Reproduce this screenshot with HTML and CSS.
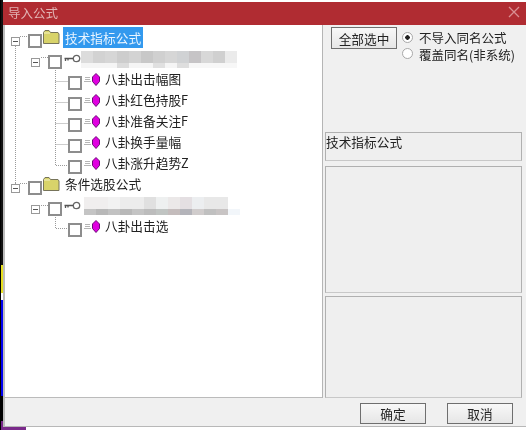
FILE: index.html
```html
<!DOCTYPE html>
<html lang="zh">
<head>
<meta charset="utf-8">
<title>导入公式</title>
<link rel="stylesheet" href="styles.css">
</head>
<body>
<div class="screen">
  <div class="edge"></div>
  <div class="window">
    <header class="titlebar">
      <span class="title">导入公式</span>
      <svg class="close" width="12" height="12" viewBox="0 0 12 12"><path d="M1 1L11 11M11 1L1 11" stroke="#d98f92" stroke-width="1.3" fill="none"/></svg>
    </header>
    <div class="main">
      <div class="tree">
        <svg class="links" width="317" height="373" viewBox="0 0 317 373">
          <g stroke="#9a9a9a" stroke-width="1" stroke-dasharray="1 1" fill="none">
            <path d="M10.5 19V158M15 11.5H23"/>
            <path d="M10.5 165V158M15 158.5H23"/>
            <path d="M30.5 41V36M36 32.5H43"/>
            <path d="M30.5 186V180M36 180.5H43"/>
            <path d="M50.5 43V140.5H63M50.5 56.500H63M50.5 77.500H63M50.500 98.500H63M50.500 119.500H63"/>
            <path d="M50.5 190V203.500H63"/>
          </g>
        </svg>
        <div class="row lv0 r1">
          <span class="exp"></span><span class="check"></span>
          <svg class="folder" width="17" height="15" viewBox="0 0 17 15"><path d="M.5 13.500V2.500L2 .5H6L7.500 2.500H15L16 4V13.500Z" fill="#d8d36a" stroke="#77745a"/><path d="M1 3H7" stroke="#f4f2c4"/></svg>
          <span class="name selected">技术指标公式</span>
        </div>
        <div class="row lv1">
          <span class="exp"></span><span class="check"></span>
          <svg class="key" width="17" height="9" viewBox="0 0 17 9"><circle cx="12.500" cy="4.500" r="3.200" fill="#fff" stroke="#666" stroke-width="1.300"/><path d="M.5 4.500H9M1.500 4.500V7M4 4.500V6.500" stroke="#555" stroke-width="1.300" fill="none"/></svg>
          <span class="mosaic mosaic-a"></span>
        </div>
        <div class="row lv2"><span class="check"></span><svg class="gem" width="18" height="13" viewBox="0 0 18 13"><path d="M1 4.500H6M1 6.500H6M0 8.500H7" stroke="#b5b5b5"/><path d="M12 .5L15.500 4V8.500L12 12.500L8.500 8.500V4Z" fill="#e000e0" stroke="#6e0a78"/></svg><span class="name">八卦出击幅图</span></div>
        <div class="row lv2"><span class="check"></span><svg class="gem" width="18" height="13" viewBox="0 0 18 13"><path d="M1 4.500H6M1 6.500H6M0 8.500H7" stroke="#b5b5b5"/><path d="M12 .5L15.500 4V8.500L12 12.500L8.500 8.500V4Z" fill="#e000e0" stroke="#6e0a78"/></svg><span class="name">八卦红色持股F</span></div>
        <div class="row lv2"><span class="check"></span><svg class="gem" width="18" height="13" viewBox="0 0 18 13"><path d="M1 4.500H6M1 6.500H6M0 8.500H7" stroke="#b5b5b5"/><path d="M12 .5L15.500 4V8.500L12 12.500L8.500 8.500V4Z" fill="#e000e0" stroke="#6e0a78"/></svg><span class="name">八卦准备关注F</span></div>
        <div class="row lv2"><span class="check"></span><svg class="gem" width="18" height="13" viewBox="0 0 18 13"><path d="M1 4.500H6M1 6.500H6M0 8.500H7" stroke="#b5b5b5"/><path d="M12 .5L15.500 4V8.500L12 12.500L8.500 8.500V4Z" fill="#e000e0" stroke="#6e0a78"/></svg><span class="name">八卦换手量幅</span></div>
        <div class="row lv2"><span class="check"></span><svg class="gem" width="18" height="13" viewBox="0 0 18 13"><path d="M1 4.500H6M1 6.500H6M0 8.500H7" stroke="#b5b5b5"/><path d="M12 .5L15.500 4V8.500L12 12.500L8.500 8.500V4Z" fill="#e000e0" stroke="#6e0a78"/></svg><span class="name">八卦涨升趋势Z</span></div>
        <div class="row lv0">
          <span class="exp"></span><span class="check"></span>
          <svg class="folder" width="17" height="15" viewBox="0 0 17 15"><path d="M.5 13.500V2.500L2 .5H6L7.500 2.500H15L16 4V13.500Z" fill="#d8d36a" stroke="#77745a"/><path d="M1 3H7" stroke="#f4f2c4"/></svg>
          <span class="name">条件选股公式</span>
        </div>
        <div class="row lv1">
          <span class="exp"></span><span class="check"></span>
          <svg class="key" width="17" height="9" viewBox="0 0 17 9"><circle cx="12.500" cy="4.500" r="3.200" fill="#fff" stroke="#666" stroke-width="1.300"/><path d="M.5 4.500H9M1.500 4.500V7M4 4.500V6.500" stroke="#555" stroke-width="1.300" fill="none"/></svg>
          <span class="mosaic mosaic-b"></span>
        </div>
        <div class="row lv2"><span class="check"></span><svg class="gem" width="18" height="13" viewBox="0 0 18 13"><path d="M1 4.500H6M1 6.500H6M0 8.500H7" stroke="#b5b5b5"/><path d="M12 .5L15.500 4V8.500L12 12.500L8.500 8.500V4Z" fill="#e000e0" stroke="#6e0a78"/></svg><span class="name">八卦出击选</span></div>
      </div>
      <aside class="side">
        <div class="options">
          <button class="btn select-all" type="button">全部选中</button>
          <div class="radios">
            <label class="radio"><span class="dot on"></span>不导入同名公式</label>
            <label class="radio"><span class="dot"></span>覆盖同名(非系统)</label>
          </div>
        </div>
        <div class="box caption">技术指标公式</div>
        <div class="box middle"></div>
        <div class="box lower"></div>
      </aside>
    </div>
    <footer class="actions">
      <button class="btn action" type="button">确定</button>
      <button class="btn action" type="button">取消</button>
    </footer>
    <div class="under"></div>
  </div>
</div>
</body>
</html>
```
FILE: styles.css
```css
* { box-sizing: border-box; }
html, body { margin: 0; padding: 0; }
body { width: 526px; height: 430px; overflow: hidden; background: #fff; font-family: "Noto Sans CJK SC", "Liberation Sans", sans-serif; color: #222; }
.screen { display: flex; width: 526px; height: 430px; }
.edge { width: 3px; flex: none; background:
  linear-gradient(#000, #000) left top / 1px 100% no-repeat,
  linear-gradient(#111 0 265px, #e8e020 265px 293px, #fff 293px 300px, #0000f0 300px 396px, #000 396px 421px, #7a2a8a 421px); }
.window { flex: 1; display: flex; flex-direction: column; padding-top: 2px; background: #fff; min-width: 0; filter: blur(.3px); }
.titlebar { height: 23px; flex: none; display: flex; align-items: center; justify-content: space-between; padding: 0 6px 2px 5px; background: #b02c32; }
.title { font-size: 12.500px; color: #e2b4b4; }
.close { margin-top: -1px; }
.main { flex: none; height: 373px; display: flex; background: #f0f0f0; border-left: 2px solid #bcbcbc; }
.tree { position: relative; width: 317px; height: 373px; flex: none; background: #fff; padding-top: 5px; border-bottom: 1px solid #bbb; }
.links { position: absolute; left: 0; top: 0; }
.row { position: relative; height: 21px; display: flex; align-items: flex-start; color: #222; }
.lv0 { padding-left: 6px; }
.lv1 { padding-left: 26px; }
.lv2 { padding-left: 63px; }
.exp { width: 9px; height: 9px; margin-top: 7px; margin-right: 8px; flex: none; background: linear-gradient(#555,#555) center / 5px 1px no-repeat #fff; border: 1px solid #999; }
.check { width: 14px; height: 14px; margin-top: 4px; flex: none; background: #fff; border: 2.500px solid #8d8d8d; }
.lv0 .folder { margin: 0 0 0 1px; }
.folder { flex: none; margin-top: 0; }
.lv0 .name { margin-left: 3px; margin-top: -3px; }
.key { flex: none; margin: 3px 0 0 2px; }
.gem { flex: none; margin: 1px 0 0 2px; }
.lv2 .name { margin-left: 1px; margin-top: -2px; }
.name { font-size: 12.700px; line-height: 20px; white-space: nowrap; padding: 0 2px; }
.lv2 .name { line-height: 18px; }
.selected { background: #3399ee; color: #e8f4ff; height: 21px; line-height: 21px; }
.mosaic { height: 17px; flex: none; margin: 0; }
.mosaic-a { width: 156px; height: 17px; margin-top: 0; background:
  linear-gradient(90deg, #dcdcdc 0 12px, #d2d2d2 12px 24px, #d6d6d6 24px 36px, #cdcdcd 36px 48px, #d3d3d3 48px 60px, #c8c8c8 60px 72px, #d0d0d0 72px 84px, #d6d6d6 84px 96px, #d0d2d4 96px 108px, #c6c4c6 108px 120px, #d8d8d8 120px 132px, #d0d0d0 132px 144px, #ebebeb 144px) left top / 100% 12px no-repeat,
  linear-gradient(90deg, #f5f5f5 0 36px, #dcdcdc 36px 48px, #f5f5f5 48px 72px, #e0e0e0 72px 84px, #f5f5f5 84px 96px, #dedede 96px 108px, #f7f7f7 108px) left bottom / 100% 5px no-repeat; }
.mosaic-b { width: 156px; margin: -1px 0 0 3px; height: 18px; background:
  linear-gradient(90deg, #f0eeee 0 24px, #f2f2f2 24px 36px, #ececec 36px 60px, #e0e0e0 60px 72px, #eef0f0 72px 84px, #ebe8e8 84px 96px, #e4dfe2 96px 108px, #eceef0 108px 120px, #e8e8e8 120px 144px, #fff 144px) left top / 100% 12px no-repeat,
  linear-gradient(90deg, #c4c4c4 0 12px, #b8b8b8 12px 24px, #c2c2c2 24px 36px, #b8b8b8 36px 48px, #c4c4c4 48px 60px, #bcbcbc 60px 72px, #c0c4c2 72px 84px, #c4bcbc 84px 96px, #b4b4ba 96px 108px, #d0cccc 108px 120px, #c0c0c0 120px 132px, #c8c4c4 132px 144px, #f2f6fa 144px) left bottom / 100% 6px no-repeat; }
.side { flex: 1; min-width: 0; padding-left: 2px; display: flex; flex-direction: column; border-left: 1px solid #b5b5b5; }
.options { height: 107px; flex: none; display: flex; gap: 5px; padding: 2px 0 0 6px; }
.btn { font: inherit; font-size: 12.700px; color: #222; padding: 0; border: 1px solid #6f6f6f; background: linear-gradient(#f8f8f8, #e6e6e6); }
.select-all { width: 66px; height: 22px; }
.radios { display: flex; flex-direction: column; }
.radio { display: flex; align-items: center; gap: 6px; font-size: 12.500px; line-height: 16.500px; height: 16.500px; white-space: nowrap; margin-top: 3px; }
.radio + .radio { margin-top: 0; }
.dot { width: 11px; height: 11px; margin-top: -2px; flex: none; border-radius: 50%; background: #fff; border: 1px solid #a8a8a8; }
.dot.on { background: radial-gradient(circle, #222 0 2px, #fff 2.500px); }
.box { width: 197px; flex: none; background: #efefef; border: 1px solid #b0b0b0; border-bottom-color: #c8c8c8; }
.caption { height: 29px; margin-bottom: 5px; font-size: 12.700px; line-height: 18px; }
.middle { height: 127px; margin-bottom: 3px; }
.lower { height: 102px; }
.actions { flex: 1; display: flex; justify-content: flex-end; gap: 21px; padding: 5px 13px 0 0; background: #f0f0f0; border-left: 2px solid #bcbcbc; border-bottom: 1px solid #b8b8b8; }
.action { width: 66px; height: 21px; }
.under { height: 3px; flex: none; background: linear-gradient(90deg, #7a2a8a 0 23px, #fff 23px); }
```
